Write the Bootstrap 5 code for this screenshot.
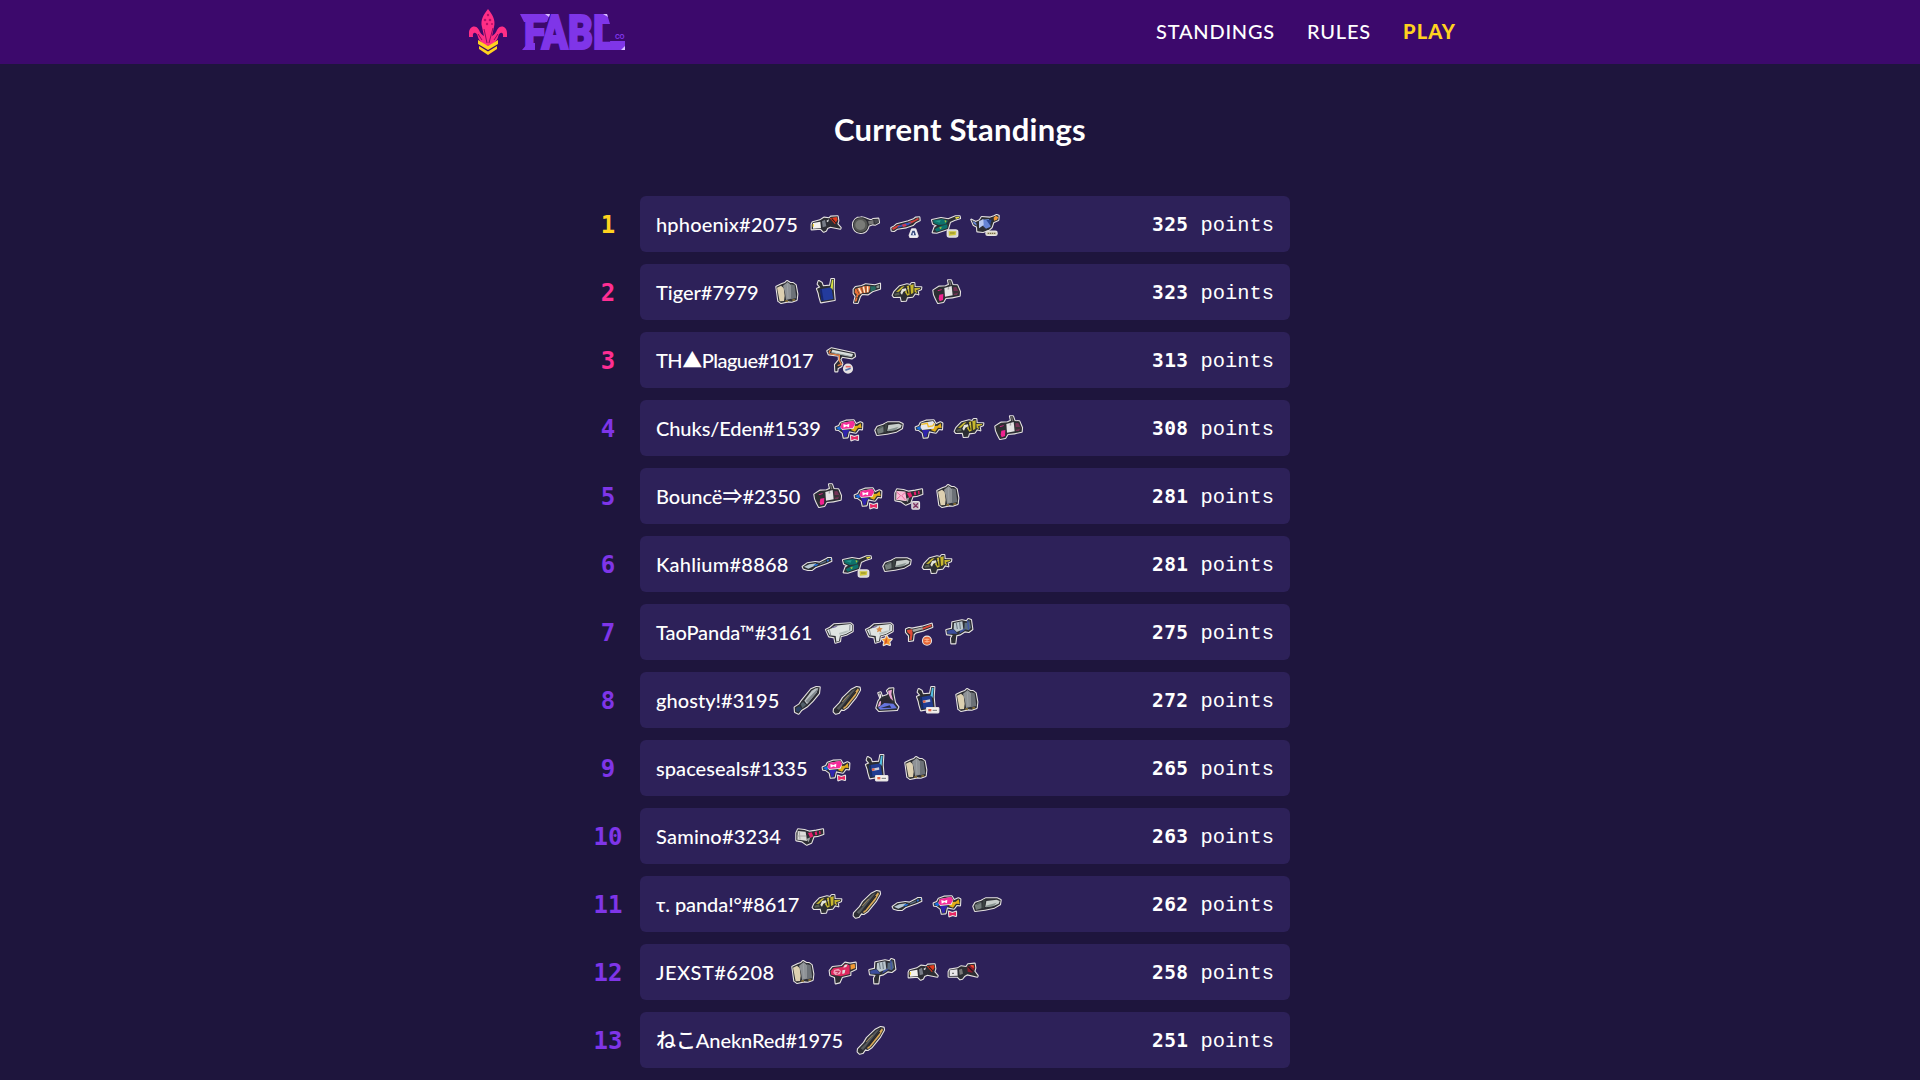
<!DOCTYPE html>
<html lang="en">
<head>
<meta charset="utf-8">
<meta name="viewport" content="width=device-width, initial-scale=1">
<title>FABL - Current Standings</title>
<link rel="stylesheet" href="https://cdn.jsdelivr.net/npm/bootstrap@5.3.0/dist/css/bootstrap.min.css">
<style>
  body { background: #1e153d; color: #fff; font-family: Lato, "Noto Sans CJK JP", sans-serif; font-size: 20px; overflow: hidden; height: 100vh; }
  .top-bar { background: #3c096c; height: 64px; }
  .site-width { width: 992px; margin: 0 auto; }
  .menu-link { color: #fff; text-decoration: none; font-weight: 500; white-space: nowrap; line-height: 24px; padding-bottom: 2px; }
  .menu-play { color: #ffd21f; font-weight: 900; }
  .page-title { font-size: 31px; font-weight: 700; line-height: 40px; margin: 45px auto 47px; white-space: nowrap; }
  .board { width: 714px; margin-left: 576px; gap: 12px; }
  .rank-no { width: 64px; height: 56px; padding-top: 1px; font: 700 24px/56px "DejaVu Sans Mono", monospace; color: #7f35e8; text-align: center; }
  .rank-gold { color: #ffd21f; }
  .rank-pink { color: #ff2e93; }
  .entry { background: #2d2159; border-radius: 6px; height: 56px; padding: 0 16px; }
  .player { white-space: nowrap; margin-right: 12px; font-weight: 500; line-height: 30px; padding-bottom: 1px; }
  .weapon { width: 32px; height: 32px; margin-right: 8px; flex: none; overflow: visible; }
  .score { font: 400 20.4px/30px "Liberation Mono", monospace; white-space: pre; padding-top: 2px; }
  .score b { font: 700 19.5px/30px "DejaVu Sans Mono", monospace; letter-spacing: .35px; }
  .logo { overflow: visible; }
  .o { stroke: #e6e3e2; stroke-width: 6.5; stroke-linejoin: round; stroke-linecap: round; paint-order: stroke; fill: #2c2d33; }
</style>
<script src="https://cdn.jsdelivr.net/npm/bootstrap@5.3.0/dist/js/bootstrap.bundle.min.js"></script>
</head>
<body>
<svg width="0" height="0" class="position-absolute" aria-hidden="true">
  <symbol id="stamper" viewBox="0 0 96 96">
    <path class="o" d="M5 49 8 43 30 37 42 29 58 31 62 26 83 25 85 38 82 48 92 59 91 62 61 56 52 60 48 68 41 71 32 62 5 64Z"/>
    <path fill="#f3f1ec" d="M9 45 31 41 33 60 9 62Z"/><path fill="#ffe14d" d="M8 48h4v8H8z"/><path fill="#777c86" d="M36 40 45 35 49 55 38 58Z"/><path fill="#e33a1c" d="M59 31 80 27 83 34 75 49 66 38Z"/><path fill="#2b1a20" d="m66 30 13 14-2 2-13-13z"/><path fill="#eee" d="m49 39 8-5-3 9z"/>
  </symbol>
  <symbol id="stamper2" viewBox="0 0 96 96">
    <path class="o" d="M5 47 8 41 32 37 42 31 58 33 63 25 83 23 85 36 82 46 92 59 91 62 61 55 52 60 46 68 39 70 32 62 5 62Z"/>
    <path fill="#e8e6e8" d="M8 43 31 40 32 59 8 60Z"/><path fill="#777" d="M15 50h6v4h-6zM36 41l9-3 3 15-10 4z"/><path fill="#8d1c2d" d="M61 32 80 26 83 35 76 50 62 47Z"/><path fill="#f04b2d" d="m69 26 11 2 1 8-6-2z"/><path fill="#23151c" d="m65 31 14 14-3 2-13-13z"/>
  </symbol>
  <symbol id="pan" viewBox="0 0 96 96">
    <path class="o" d="M32 28C48 27 55 38 65 36L69 33 85 32 87 44 76 50 68 49 56 53C53 68 44 74 32 75 17 74 9 64 9 51 9 37 19 28 32 28Z"/>
    <circle cx="32" cy="51" r="21" fill="#555754"/><circle cx="31" cy="51" r="15" fill="#797b77"/><path fill="#777" d="M54 40 70 36 71 47 57 50Z"/><path fill="#4a4b50" d="m72 35 12-1 2 9-11 4z"/>
  </symbol>
  <symbol id="bowred" viewBox="0 0 96 96">
    <path class="o" d="M4 60 13 55 20 49 55 40 71 34 77 29 88 28 89 37 77 43 69 51 49 58 22 62 12 69 5 68Z"/>
    <path fill="#d6403b" d="M6 60 24 51 32 51 19 61 9 66ZM54 43 75 35 82 30 88 33 72 42 60 48Z"/><path fill="#3852bd" d="M23 55 46 46 65 43 56 51 24 59Z"/><path fill="#d23b54" d="m35 50 12-3 3 7-10 3z"/>
    <path class="o" d="m66 64 10 0 7 20-2 3H61l-2-5Z" style="fill:#eef0f7"/><path fill="#384b7c" d="m67 68 7 0 4 14H62z"/><path fill="#dce5f9" d="M68 74h4v7h-4z"/>
  </symbol>
  <symbol id="tent" viewBox="0 0 96 96">
    <path class="o" d="M6 36 33 30 55 34 77 25 89 25 90 31 73 36 60 42 54 63 20 74 8 73 14 57 21 53 9 47Z"/>
    <path fill="#0d716c" d="M9 37 36 33 54 38 47 49 26 51 11 45ZM14 64 32 54 52 49 52 60 20 71Z"/><path fill="#25998b" d="m14 39 18-3-3 8z"/><path fill="#a8c736" d="m27 59 8-3-2 8zM44 36l6 3-5 6z"/><path fill="#ece33c" d="m75 28 12-2 1 3-10 4z"/>
    <rect class="o" x="53" y="67" width="29" height="19" rx="5" style="fill:#d7d7d3"/><path fill="#cfc637" d="M56 70h23l-2 11-20 2z"/><path fill="#625f2e" d="M60 74h14v2H60z"/>
  </symbol>
  <symbol id="bluegun" viewBox="0 0 96 96">
    <path class="o" d="M4 35 17 42 29 37 35 27 59 29 72 25 80 21 86 23 85 36 70 43 65 58 57 65 39 72 22 70 21 56 11 51Z"/>
    <path fill="#6685d5" d="M8 39 18 44 21 53 11 47ZM36 35 57 33 62 56 48 62 36 51Z"/><path fill="#b9c9f0" d="m27 40 13-7 1 18-14 10z"/><path fill="#2b458f" d="m49 36 16-1-5 17z"/><path fill="#f19a35" d="m71 29 6-6 8 5-4 7-9 3z"/>
    <rect class="o" x="49" y="71" width="31" height="10" rx="4" style="fill:#d8d4be"/><path stroke="#786c45" stroke-width="4" stroke-dasharray="4 2" d="M53 76h25"/>
  </symbol>
  <symbol id="brella" viewBox="0 0 96 96">
    <path class="o" d="M16 32 33 24 42 21 48 15 58 21 66 21 74 27 79 54 77 72 62 77 52 76 30 81 22 75Z"/>
    <path fill="#ddd0b1" d="M18 35 30 29 38 36 41 60 39 75 26 76Z"/><path fill="#8e9296" d="M36 29 50 18 60 27 60 68 45 72 42 50Z"/><path fill="#6c7177" d="M60 25 71 28 76 66 60 70Z"/><path stroke="#a5a9ae" stroke-width="2" fill="none" d="m49 24 2 43"/><path fill="#987b38" d="M43 73h8v4h-8zM64 70h8v4h-8z"/>
  </symbol>
  <symbol id="backpack" viewBox="0 0 96 96">
    <path class="o" d="M20 24 23 15 32 20 36 31 57 29 61 9 69 9 68 39 71 72 30 79 25 62 23 52 18 38 28 34Z"/>
    <path fill="#233b9d" d="M27 40 61 34 67 69 32 75Z"/><path fill="#172570" d="m27 40 5-2 6 36-6 1z"/><path fill="#d7e242" d="m63 11 4 0-2 31-6-8z"/>
  </symbol>
  <symbol id="tigergun" viewBox="0 0 96 96">
    <path class="o" d="M8 40 14 33 32 30 44 25 72 28 87 23 87 38 64 46 51 55 33 54 27 61 20 81 9 80 14 61 8 52Z"/>
    <path fill="#e9733a" d="M12 39 30 34 42 30 58 31 54 49 32 52 22 58 17 76 11 77 17 55 11 50Z"/><path d="m23 36 8 16M37 32l4 18m9-19 0 18" stroke="#fff1d5" stroke-width="4"/><path d="m17 38 7 15M31 34l5 17M44 31l1 18M15 63l7 3" stroke="#443028" stroke-width="2"/><path fill="#266b62" d="m58 31 15 0 2 9-16 7z"/><path fill="#8d9791" d="m76 30 9-3 0 8-8 2z"/>
  </symbol>
  <symbol id="splatling" viewBox="0 0 96 96">
    <path class="o" d="M5 58 10 47 26 31 48 25 58 27 62 21 70 21 71 33 91 34 90 40 80 44 82 55 72 52 65 62 48 64 45 74 32 75 29 62 9 63Z"/>
    <path fill="#c6b72f" d="m15 48 17-16 9-2-17 17zM48 30l20-5-1 26-18 8-7-10zM70 36h17v3l-12 4 4 9-8-4z"/><path fill="#e4e4d8" d="m28 51 5-12 20-4-3 6-13 6-4 9z"/><path fill="#555c50" d="m10 54 14-5 2 8-14 2z"/><path stroke="#2a291d" stroke-width="4" d="m56 29 2 27M46 33l5 20"/>
  </symbol>
  <symbol id="camera" viewBox="0 0 96 96">
    <path class="o" d="M7 43 24 32 44 31 54 26 51 13 60 13 65 27 79 28 87 47 86 59 64 64 44 66 37 78 21 81 15 70 9 56Z"/>
    <path fill="#e5e4e5" d="m40 36 22-6 3 28-23 4z"/><path fill="#aaa" d="m50 34 4-1 1 7-5 1z"/><path fill="#ef238f" d="m25 56 12-2-1 18-10 4-3-8zM20 43l12-3v2l-11 3z"/><path fill="#733255" d="m67 34 9-1 7 14-5 10-10 0z"/><path fill="#383338" d="m66 45 17 0-1 5-15 4z"/><path fill="#716d70" d="M54 15h4l3 13h-4z"/>
  </symbol>
  <symbol id="roller" viewBox="0 0 96 96">
    <path class="o" d="M7 21 19 13 88 28 90 37 81 43 51 38 46 47 52 58 49 67 38 73 37 82 31 82 30 62 42 48 41 35 11 31Z"/>
    <path fill="#dae0de" d="m22 17 62 13-3 8-62-13z"/><path fill="#9eaaa8" d="m21 24 61 13-1 3-62-13z"/><path fill="none" stroke="#e88045" stroke-width="4" d="m12 27 4-9m-3 11 30 5v15l6 12-11 4"/>
    <circle class="o" cx="69" cy="74" r="12" style="fill:#e6e1e2"/><path stroke="#e36a68" stroke-width="5" d="M62 68h15"/><path stroke="#4e6fab" stroke-width="5" d="m61 79 16-6"/>
  </symbol>
  <symbol id="shooter" viewBox="0 0 96 96">
    <path class="o" d="M8 46 18 42 23 32 39 26 62 25 69 37 82 31 88 34 87 52 77 51 69 62 48 58 44 76 32 77 29 63 17 54 9 53Z"/>
    <path fill="#196bdc" d="m9 48 11-5 5 8-6 4z"/><path fill="#3024ac" d="m27 54 24 0-7 8-3 12-7 1-4-14z"/><path fill="#e1ad18" d="m54 54 8-12 12-1 9-7 3 14-11-1-9 12z"/><path fill="#e5e7ec" d="m22 45 4-12 34-6 7 9-5 14-35 4z"/><path fill="none" stroke="#efbc26" stroke-width="4" d="m25 37 18-3 3 10 13-2 5-8"/>
  </symbol>
  <symbol id="shooterpink" viewBox="0 0 96 96">
    <use href="#shooter" width="96" height="96"/>
    <path fill="#f52c9a" d="m22 45 5-12 34-7 5 10-7 12-31 3z"/><path fill="#fff" d="m31 36 9 3 9-4-1 11-8-3-8 4z"/>
    <path class="o" d="m54 71 10 4 11-4v13l-10-3-10 4Z" style="fill:#e92763"/>
  </symbol>
  <symbol id="dynamo" viewBox="0 0 96 96">
    <path class="o" d="M7 55 13 44 31 38 44 31 78 31 89 36 87 49 70 59 42 65 12 69Z"/>
    <path fill="#747d7c" d="m11 51 20-8 1 18-17 5z"/><path fill="#c8cfcb" d="m46 39 31-4 9 4-3 8-16 7-24 3z"/><path fill="#879490" d="m44 53 33-9-9 10-23 4z"/><path stroke="#3b4342" stroke-width="7" d="M40 35 36 61"/><path fill="#54605e" d="m18 45 10-4 1 5-11 6z"/>
  </symbol>
  <symbol id="cannon" viewBox="0 0 96 96">
    <path class="o" d="M10 39 15 28 34 30 50 35 70 32 90 28 91 42 74 48 62 49 55 68 41 74 27 64 10 61Z"/>
    <path fill="#dcdcd9" d="m14 33 24 2 4 28-14-2-15-2z"/><path stroke="#abaaa8" stroke-width="3" d="m19 35 2 24M13 48h27"/><path fill="#e41e6b" d="m45 39 11-2 5 12-9 5zM65 36l6-2 2 11-6 1zM78 33l4-1 1 10-4 1z"/><path fill="#9ba09e" d="m40 57 12-5-5 15z"/>
  </symbol>
  <symbol id="cannonpink" viewBox="0 0 96 96">
    <use href="#cannon" width="96" height="96"/>
    <path fill="#f7bdd6" d="m14 33 26 2 4 28-16-2-15-2z"/><path fill="none" stroke="#e96aa0" stroke-width="3" d="m14 36 12 11-11 10m25-20L29 47l11 13"/>
    <rect class="o" x="61" y="66" width="20" height="20" rx="2" style="fill:#c7bac7"/><path fill="none" stroke="#7b315f" stroke-width="4" d="m64 70 7 7 7-7m-14 13 7-6 7 6"/>
  </symbol>
  <symbol id="wiper" viewBox="0 0 96 96">
    <path class="o" d="M5 56 19 46 43 42 55 44 75 34 81 30 90 30 91 39 76 46 55 53 43 58 33 66 21 66 8 62Z"/>
    <path fill="#b6c6d2" d="m9 56 16-7 21-3-8 9-16 7z"/><path fill="#276fd6" d="m42 49 12-2-9 8-8-1z"/><path fill="#5a6e84" d="m57 45 17-7 1 4-17 7z"/><path fill="#276fd6" d="m77 36 5-3 2 6-6 2zM87 32h3v4h-3z"/>
  </symbol>
  <symbol id="blaster" viewBox="0 0 96 96">
    <path class="o" d="M6 41 18 35 30 25 80 22 86 27 86 46 67 56 50 61 48 76 34 80 31 64 15 61Z"/>
    <path fill="#dfe4e2" d="m9 42 14-5 10-8 46-5 5 3v17l-18 10-18 5-3 16-8 2-2-17-18-2z"/><path stroke="#566169" stroke-width="2" d="M16 40 20 57M78 27l-1 17"/><path fill="#645493" d="m26 32 16-3-7 5-12 3z"/><path fill="#b7c0bd" d="m45 51 22-7 12-1-14 8-18 5z"/>
  </symbol>
  <symbol id="blasterstar" viewBox="0 0 96 96">
    <use href="#blaster" width="96" height="96"/>
    <path fill="#d88a46" d="m36 38 7-1 3-7 3 6 7 1-5 5 1 7-6-3-7 3 2-7z"/>
    <path class="o" d="m54 69 9-1 5-9 5 9 10 1-7 8 2 10-10-4-9 4 2-10Z" style="fill:#f79b31"/><path fill="#d95a25" d="m63 74 5-9 2 14-8 5z"/>
  </symbol>
  <symbol id="nzap" viewBox="0 0 96 96">
    <path class="o" d="M6 40 15 36 24 38 54 32 83 23 85 33 60 43 36 49 29 55 27 73 15 75 15 59 6 49Z"/>
    <path fill="#df4b38" d="m9 42 15-2 2 12-3 20-7 1 3-17-9-7zM54 36l28-11 1 6-28 10z"/><path fill="#a6a9a3" d="m24 41 31-7 2 6-28 8z"/>
    <circle class="o" cx="69" cy="74" r="12" style="fill:#e66535"/><path fill="none" stroke="#ffb28c" stroke-width="3" d="M61 70h15m-14 7h15M69 68v12"/>
  </symbol>
  <symbol id="squeezer" viewBox="0 0 96 96">
    <path class="o" d="M7 42 24 38 25 19 54 13 68 16 73 9 81 12 85 40 74 48 63 46 49 55 37 58 34 82 22 82 21 67 26 57 9 55Z"/>
    <path fill="#3b4d9c" d="m10 44 18-4 13 13-31 0zM50 42l21-8-12 11-14 8z"/><path fill="#bbc8ce" d="m30 21 25-5 3 24-20 8-9-9z"/><path stroke="#68757e" stroke-width="3" d="m37 21 3 18m7-20 2 20"/><path fill="#596d80" d="m62 20 9 0 5-7 5 22-7 8-13-4z"/><path fill="#4056a7" d="m69 13 4 0 3 27-4 2z"/>
  </symbol>
  <symbol id="blade" viewBox="0 0 96 96">
    <path class="o" d="M32 50 60 16 76 9 86 10 84 28 65 51 49 67 31 78 23 89 12 84 11 70 25 61Z"/>
    <path fill="#bcc2c5" d="m40 50 22-30 12-7 8 0-5 12-29 36z"/><path fill="#81888d" d="m44 51 36-37-3 12-26 31z"/><path fill="#293d63" d="m15 72 10-5 8 8-11 9-7-3z"/><path fill="#53616b" d="m29 60 7-6 10 8-12 11z"/>
  </symbol>
  <symbol id="goldblade" viewBox="0 0 96 96">
    <path class="o" d="M9 75 27 56 36 41 61 17 77 9 86 11 87 18 75 39 50 70 38 78 31 76 23 87 14 89 8 83Z"/>
    <path fill="#d9a957" d="m36 73 29-40 16-20 3 5-10 18-27 33-8 6z"/><path fill="#565a5c" d="m39 45 26-26 9-4-38 48-12 15-7-5 17-17z"/><path stroke="#caa45c" stroke-width="2" d="m33 54 20-21"/><path stroke="#24252a" stroke-width="4" d="m40 67 34-43"/>
  </symbol>
  <symbol id="slosher" viewBox="0 0 96 96">
    <path class="o" d="M22 27 29 25 33 38 47 34 53 29 48 20 54 14 67 13 66 25 72 56 82 69 78 78 24 81 16 72 22 52 28 43Z"/>
    <path fill="#eba4d3" d="m51 20 12-3-2 14 6 20-9-8-5-12zM20 69l5-16 6-3-3 15z"/><path fill="#2a2632" d="m29 47 19-6 11 7 4 14-30-1z"/><path fill="#6574de" d="m21 71 19-14 27 2 11 14-50 4z"/><path fill="#252940" d="m29 72 27-8 5 7z"/><path fill="#f5eef6" d="m25 28 4 1 2 11-5 4z"/>
  </symbol>
  <symbol id="backpackblue" viewBox="0 0 96 96">
    <path class="o" d="M20 24 23 15 32 20 36 31 57 29 61 9 70 9 68 39 71 72 30 79 25 62 23 52 18 38 28 34Z"/>
    <path fill="#203c91" d="M27 40 61 34 67 69 32 75Z"/><path fill="#172b62" d="m27 40 5-2 6 36-6 1z"/><path fill="#53bee4" d="m63 11 5 0-3 31-6-8z"/><path fill="#c9cddd" d="m35 50 22-4 1 7-21 4z"/><path fill="#e56545" d="m35 50 8-1 1 6-7 2z"/>
    <rect class="o" x="48" y="72" width="34" height="13" rx="1" style="fill:#f4f2ef"/><path fill="#e56545" d="M52 75h9v7h-9z"/><path stroke="#777" stroke-width="3" d="M65 79h13"/>
  </symbol>
  <symbol id="pinkcannon" viewBox="0 0 96 96">
    <path class="o" d="M8 44 17 33 44 30 54 20 69 23 86 20 87 39 70 47 70 57 45 63 38 79 26 82 24 64 10 58Z"/>
    <path fill="#df285f" d="m11 46 9-10 26-3 9-9 13 4 0 26-26 7-29-5z"/><path fill="#f0a2b9" d="m21 42 13-4 8 7-3 10-14 2-6-7z"/><path stroke="#bc224e" stroke-width="3" fill="none" d="m25 46 12 0-8 8"/><path fill="#dfdfde" d="m46 43 9-2-2 11-7 2zM53 27l9-2-4 8-9 2z"/><path fill="#f29933" d="m70 26 13-3 2 13-14 5z"/>
  </symbol>
</svg>

<header class="top-bar">
  <nav class="site-width h-100 d-flex align-items-center justify-content-between">
    <a href="#" class="d-flex" aria-label="FABL home">
      <svg class="logo" width="164" height="64" viewBox="464 0 164 64">
        <path fill="#ff2e86" d="M488 9C484 14 480 20 482 27L484 36C482 35 480 33 479 30 476 24 469 26 469 33V37H473C472 31 477 32 478 37 479 41 482 44 488 46 494 44 497 41 498 37 499 32 504 31 503 37H507V33C507 26 500 24 497 30 496 33 494 35 492 36L494 27C496 20 492 14 488 9Z"/>
        <path fill="none" stroke="#8b0c61" stroke-width="1" d="M484 29 487 43M493 28 489 43M478 34 482 40M498 34 494 40"/>
        <g fill="#b80e68"><circle cx="488" cy="15" r="1.2"/><circle cx="485" cy="20" r="1.3"/><circle cx="490" cy="20" r="1.3"/><circle cx="487" cy="24" r="1.2"/><circle cx="492" cy="24" r="1"/></g>
        <path fill="#ffd21f" d="M478 40 488 46 498 40V44L488 50 478 44ZM479 46 488 51.500 497 46V49L488 55 479 49Z"/>
        <g font-family="Roboto, sans-serif" font-weight="900" font-size="48" fill="#7f35e8" stroke="#7f35e8" stroke-width="2">
          <text x="524" y="49" textLength="90" lengthAdjust="spacingAndGlyphs">FABL</text>
        </g>
        <path fill="#7f35e8" d="M520 14h12v8h-8ZM522 50l6-7h7v7ZM528 14h22l-3 8h-19ZM570 14h8v8ZM597 14h10l3 10h-10ZM610 41h15v9h-13Z"/>
        <path fill="#d6bdff" d="M545 14h5l-1 3zM603 14h4l1 3zM621 50h4v-4z"/>
        <text x="615" y="39" font-family="Inter, sans-serif" font-weight="700" font-size="6.500" fill="#7f35e8" textLength="9.500">CO</text>
      </svg>
    </a>
    <div class="d-flex" style="gap:32px">
      <a href="#" class="menu-link" data-fit="119">STANDINGS</a>
      <a href="#" class="menu-link" data-fit="64">RULES</a>
      <a href="#" class="menu-link menu-play" data-fit="53">PLAY</a>
    </div>
  </nav>
</header>

<main>
  <h1 class="page-title text-center"><span data-fit="252">Current Standings</span></h1>
  <div id="board" class="board d-flex flex-column"></div>
</main>

<script>
  // name, points, rendered name width, weapons
  const players = [
    ["hphoenix#2075", 325, 142, "stamper pan bowred tent bluegun"],
    ["Tiger#7979", 323, 102.7, "brella backpack tigergun splatling camera"],
    ["TH▲Plague#1017", 313, 157, "roller"],
    ["Chuks/Eden#1539", 308, 164.7, "shooterpink dynamo shooter splatling camera"],
    ["Bouncë⇒#2350", 281, 144.3, "camera shooterpink cannonpink brella"],
    ["Kahlium#8868", 281, 132.7, "wiper tent dynamo splatling"],
    ["TaoPanda™#3161", 275, 156.3, "blaster blasterstar nzap squeezer"],
    ["ghosty!#3195", 272, 123.3, "blade goldblade slosher backpackblue brella"],
    ["spaceseals#1335", 265, 151.7, "shooterpink backpackblue brella"],
    ["Samino#3234", 263, 125, "cannon"],
    ["τ. panda!°#8617", 262, 143.3, "splatling goldblade wiper shooterpink dynamo"],
    ["JEXST#6208", 258, 118.7, "brella pinkcannon squeezer stamper stamper2"],
    ["ねこAneknRed#1975", 251, 187, "goldblade"]
  ];
  document.getElementById("board").innerHTML = players.map(([name, points, width, weapons], i) => `
    <div class="d-flex">
      <div class="rank-no ${i === 0 ? "rank-gold" : i < 3 ? "rank-pink" : ""}">${i + 1}</div>
      <div class="entry flex-grow-1 d-flex align-items-center">
        <span class="player" data-fit="${width}">${name}</span>
        ${weapons.split(" ").map(w => `<svg class="weapon"><use href="#${w}"/></svg>`).join("")}
        <span class="score ms-auto"><b>${points}</b> points</span>
      </div>
    </div>`).join("");
  // Spread each label's letters to its intended width.
  document.querySelectorAll("[data-fit]").forEach(el => {
    el.style.display = "inline-block";
    const gap = (el.dataset.fit - el.getBoundingClientRect().width) / [...el.textContent].length;
    el.style.letterSpacing = gap + "px";
  });
</script>
</body>
</html>
